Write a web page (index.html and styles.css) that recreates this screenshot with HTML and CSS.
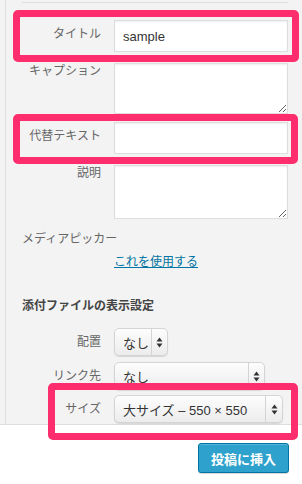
FILE: index.html
```html
<!DOCTYPE html>
<html lang="ja">
<head>
<meta charset="utf-8">
<title>添付ファイルの詳細</title>
<link rel="stylesheet" href="styles.css">
</head>
<body>
<div class="sidebar">
  <hr class="sep">
  <div class="row row-input row-first">
    <label class="lbl">タイトル</label>
    <input class="field" type="text" value="sample">
  </div>
  <div class="row row-area">
    <label class="lbl">キャプション</label>
    <textarea class="field area area-cap"></textarea>
  </div>
  <div class="row row-input">
    <label class="lbl">代替テキスト</label>
    <input class="field" type="text" value="">
  </div>
  <div class="row row-area">
    <label class="lbl">説明</label>
    <textarea class="field area area-desc"></textarea>
  </div>
  <div class="picker">メディアピッカー</div>
  <div class="use-wrap"><a class="use-link" href="#">これを使用する</a></div>
  <h3 class="settings">添付ファイルの表示設定</h3>
  <div class="row row-sel sel-first">
    <span class="lbl">配置</span>
    <div class="select w-align"><span class="val">なし</span><span class="arr"><svg width="7" height="11" viewBox="0 0 7 11"><path d="M3.5 0.5 L6.5 4.5 L0.5 4.5 Z M3.5 10.5 L6.5 6.5 L0.5 6.5 Z" fill="#333"/></svg></span></div>
  </div>
  <div class="row row-sel sel-link">
    <span class="lbl">リンク先</span>
    <div class="select w-link"><span class="val">なし</span><span class="arr"><svg width="7" height="11" viewBox="0 0 7 11"><path d="M3.5 0.5 L6.5 4.5 L0.5 4.5 Z M3.5 10.5 L6.5 6.5 L0.5 6.5 Z" fill="#333"/></svg></span></div>
  </div>
  <div class="row row-sel sel-size">
    <span class="lbl">サイズ</span>
    <div class="select w-size"><span class="val">大サイズ – 550 × 550</span><span class="arr"><svg width="7" height="11" viewBox="0 0 7 11"><path d="M3.5 0.5 L6.5 4.5 L0.5 4.5 Z M3.5 10.5 L6.5 6.5 L0.5 6.5 Z" fill="#333"/></svg></span></div>
  </div>
</div>
<div class="toolbar">
  <button class="insert" type="button">投稿に挿入</button>
</div>
<div class="mark mark-title"></div>
<div class="mark mark-alt"></div>
<div class="mark mark-size"></div>
</body>
</html>
```

FILE: styles.css
```css
* { box-sizing: border-box; }
html, body { margin: 0; padding: 0; }
body {
  width: 302px;
  height: 484px;
  overflow: hidden;
  background: #f3f3f3;
  font-family: "Liberation Sans", "Noto Sans CJK JP", sans-serif;
  font-size: 12px;
  color: #666;
  position: relative;
}
.sidebar {
  margin-left: 5px;
  border-left: 1px solid #dddddd;
  padding: 2px 14px 0 16px;
  height: 424px;
}
.sep {
  margin: 0;
  border: 0;
  border-top: 1px solid #dddddd;
  height: 0;
}
.row {
  display: flex;
  align-items: flex-start;
  gap: 13px;
}
.lbl {
  width: 79px;
  flex: none;
  text-align: right;
  line-height: 17px;
  color: #666;
}
.row-input { margin-top: 8px; }
.row-input .lbl { padding-top: 6px; }
.row-first { margin-top: 17px; }
.row-area { margin-top: 11px; }
.row-area .lbl { padding-top: 0; }
.field {
  width: 174px;
  height: 32px;
  margin: 0;
  border: 1px solid #dddddd;
  background: #fff;
  box-shadow: inset 0 1px 2px rgba(0,0,0,0.07);
  font-family: "Liberation Sans", "Noto Sans CJK JP", sans-serif;
  font-size: 13px;
  color: #333;
  padding: 0 8px;
  outline: none;
}
.area { padding: 4px 8px; resize: both; }
.area-cap { height: 51px; }
.area-desc { height: 54px; }
.picker {
  margin-top: 12px;
  line-height: 17px;
}
.use-wrap {
  margin-top: 6px;
  padding-left: 92px;
  line-height: 17px;
}
.use-link {
  color: #0074a2;
  text-decoration: underline;
}
.settings {
  margin: 27px 0 0;
  font-size: 12px;
  font-weight: bold;
  line-height: 17px;
  color: #444;
}
.row-sel { align-items: center; }
.sel-first { margin-top: 13px; }
.sel-link { margin-top: 6px; }
.sel-size { margin-top: 5px; }
.select {
  height: 28px;
  display: flex;
  align-items: stretch;
  border: 1px solid #d4d4d4;
  border-radius: 5px;
  background: linear-gradient(#fdfdfd, #ececec);
  box-shadow: 0 1px 1px rgba(0,0,0,0.12);
  color: #333;
  font-size: 13px;
}
.val {
  flex: 1;
  display: flex;
  align-items: center;
  padding-left: 8px;
  white-space: nowrap;
}
.arr {
  width: 16px;
  flex: none;
  border-left: 1px solid #d4d4d4;
  display: flex;
  align-items: center;
  justify-content: center;
}
.w-align { width: 54px; }
.w-link { width: 151px; }
.w-size { width: 169px; }
.w-size .arr { width: 17px; }
.toolbar {
  height: 60px;
  background: #fff;
  border-top: 1px solid #dddddd;
  display: flex;
  justify-content: flex-end;
  align-items: flex-start;
  padding: 18px 13px 0 0;
}
.insert {
  width: 91px;
  height: 30px;
  margin: 0;
  padding: 0;
  background: #2ea2cc;
  border: 1px solid #0074a2;
  border-radius: 3px;
  box-shadow: inset 0 1px 0 rgba(120,200,230,0.5), 0 1px 0 rgba(0,0,0,0.15);
  color: #fff;
  font-family: "Liberation Sans", "Noto Sans CJK JP", sans-serif;
  font-size: 13px;
  font-weight: bold;
}
.mark {
  position: absolute;
  border: 7px solid #fe2e6e;
  border-radius: 5px;
  pointer-events: none;
}
.mark-title { left: 13px; top: 10px; width: 286px; height: 52px; }
.mark-alt { left: 13px; top: 114px; width: 285px; height: 50px; }
.mark-size { left: 48px; top: 383px; width: 250px; height: 57px; }
```
